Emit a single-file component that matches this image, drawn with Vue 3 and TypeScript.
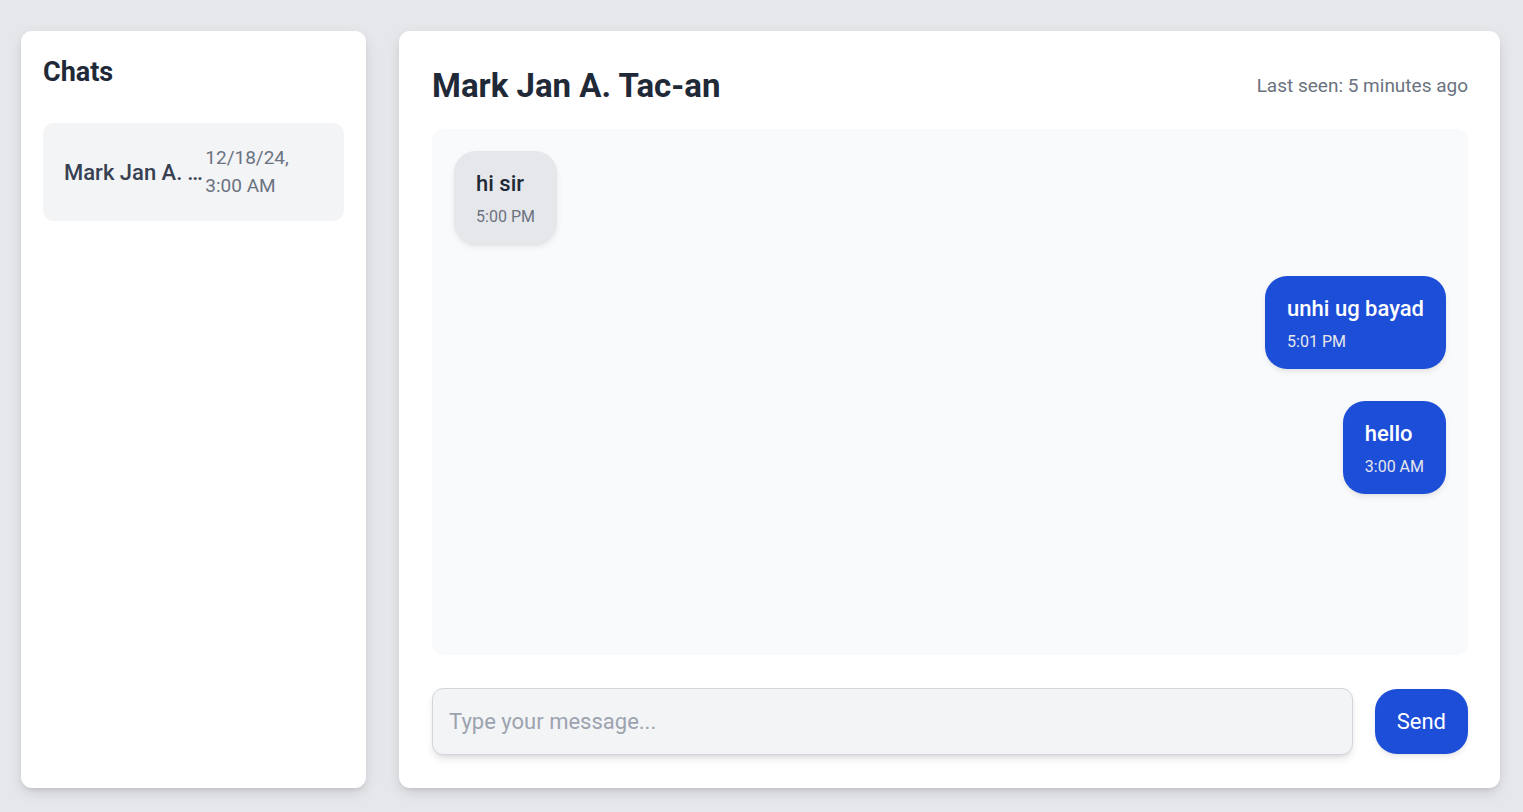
<script setup lang="ts">
import { ref } from 'vue'

interface Message {
  id: number
  text: string
  time: string
  mine: boolean
}

const contact = 'Mark Jan A. Tac-an'
const draft = ref('')
const messages = ref<Message[]>([
  { id: 1, text: 'hi sir', time: '5:00 PM', mine: false },
  { id: 2, text: 'unhi ug bayad', time: '5:01 PM', mine: true },
  { id: 3, text: 'hello', time: '3:00 AM', mine: true },
])

function send(): void {
  const text = draft.value.trim()
  if (!text) return
  const time = new Date().toLocaleTimeString('en-US', { hour: 'numeric', minute: '2-digit' })
  messages.value.push({ id: messages.value.length + 1, text, time, mine: true })
  draft.value = ''
}
</script>

<template>
  <div class="page">
    <aside class="panel sidebar">
      <h2 class="sidebar-title">Chats</h2>
      <ul class="chat-list">
        <li>
          <button type="button" class="chat-item">
            <span class="chat-name">{{ contact }}</span>
            <span class="chat-date">12/18/24, 3:00 AM</span>
          </button>
        </li>
      </ul>
    </aside>

    <main class="panel conversation">
      <header class="header">
        <h1 class="title">{{ contact }}</h1>
        <span class="last-seen">Last seen: 5 minutes ago</span>
      </header>

      <section class="messages">
        <div v-for="m in messages" :key="m.id" class="bubble" :class="{ mine: m.mine }">
          <p class="bubble-text">{{ m.text }}</p>
          <span class="bubble-time">{{ m.time }}</span>
        </div>
      </section>

      <form class="composer" @submit.prevent="send">
        <input
          v-model="draft"
          class="composer-input"
          type="text"
          placeholder="Type your message..."
          aria-label="Type your message"
        />
        <button type="submit" class="send">Send</button>
      </form>
    </main>
  </div>
</template>

<style>
body {
  background: #e5e7eb;
}
</style>

<style scoped>
.page,
.page * {
  box-sizing: border-box;
}

.page {
  display: grid;
  grid-template-columns: minmax(0, 21fr) minmax(0, 67fr);
  gap: 33px;
  min-height: 100vh;
  padding: 31px 23px 24px 21px;
  background: #e5e7eb;
  color: #1f2937;
  font-family: Roboto, sans-serif;
  font-size: 22px;
  line-height: 33px;
}

.panel {
  background: #fff;
  border-radius: 11px;
  box-shadow: 0 5px 14px -1px rgb(0 0 0 / 0.12), 0 3px 5px -2px rgb(0 0 0 / 0.1);
}

.sidebar {
  padding: 22px;
}

.sidebar-title {
  margin: 0 0 32px;
  font-size: 27px;
  font-weight: 700;
  line-height: 38px;
}

.chat-list {
  margin: 0;
  padding: 0;
  list-style: none;
}

.chat-item {
  display: flex;
  align-items: center;
  justify-content: space-between;
  width: 100%;
  padding: 21px;
  border: 0;
  border-radius: 11px;
  background: #f3f4f6;
  font: inherit;
  text-align: left;
  cursor: pointer;
}

.chat-name {
  overflow: hidden;
  color: #374151;
  font-weight: 500;
  text-overflow: ellipsis;
  white-space: nowrap;
}

.chat-date {
  color: #6b7280;
  font-size: 19px;
  line-height: 28px;
}

.conversation {
  display: flex;
  flex-direction: column;
  padding: 33px 32px 33px 33px;
}

.header {
  display: flex;
  align-items: center;
  justify-content: space-between;
  margin-bottom: 22px;
}

.title {
  margin: 0;
  font-size: 33px;
  font-weight: 700;
  line-height: 43px;
}

.last-seen {
  color: #6b7280;
  font-size: 19px;
  line-height: 28px;
}

.messages {
  display: flex;
  flex: 1;
  flex-direction: column;
  align-items: flex-start;
  gap: 32px;
  margin-bottom: 33px;
  padding: 22px;
  border-radius: 11px;
  background: #f9fafb;
}

.bubble {
  padding: 16px 22px;
  border-radius: 22px;
  background: #e5e7eb;
  box-shadow: 0 3px 6px -1px rgb(0 0 0 / 0.1), 0 1px 3px -1px rgb(0 0 0 / 0.06);
}

.bubble-text {
  margin: 0 0 5px;
  font-weight: 500;
}

.bubble-time {
  display: block;
  color: #6b7280;
  font-size: 16px;
  line-height: 23px;
}

.bubble.mine {
  align-self: flex-end;
  background: #1d4ed8;
  color: #fff;
}

.bubble.mine .bubble-time {
  color: #e5e7eb;
}

.composer {
  display: flex;
  align-items: center;
  gap: 22px;
}

.composer-input {
  flex: 1;
  min-width: 0;
  padding: 16px;
  border: 1px solid #d1d5db;
  border-radius: 11px;
  background: #f3f4f6;
  box-shadow: 0 5px 8px -1px rgb(0 0 0 / 0.1), 0 3px 5px -3px rgb(0 0 0 / 0.1);
  color: #1f2937;
  font: inherit;
}

.composer-input::placeholder {
  color: #9ca3af;
  opacity: 1;
}

.send {
  padding: 16px 22px;
  border: 0;
  border-radius: 22px;
  background: #1d4ed8;
  box-shadow: 0 3px 6px -1px rgb(0 0 0 / 0.1), 0 1px 3px -1px rgb(0 0 0 / 0.06);
  color: #fff;
  font: inherit;
  cursor: pointer;
}
</style>
